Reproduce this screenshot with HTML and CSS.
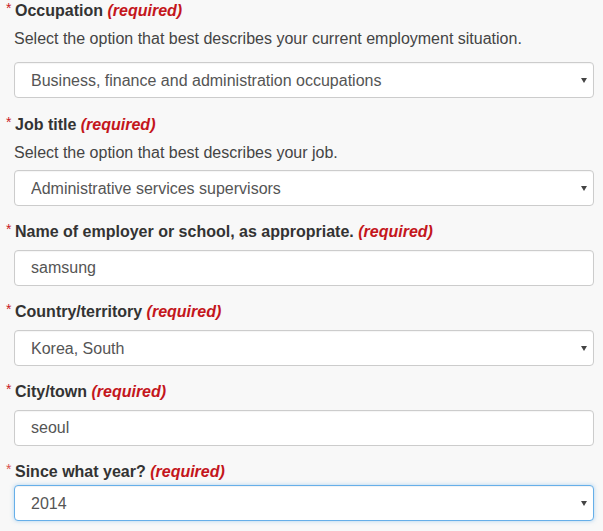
FILE: index.html
```html
<!DOCTYPE html>
<html lang="en">
<head>
    <meta charset="UTF-8">
    <meta name="viewport" content="width=device-width, initial-scale=1.0">
    <title>Employment details</title>
    <link rel="stylesheet" href="styles.css">
</head>
<body>
    <form class="form">
        <!-- Occupation -->
        <div class="form-group form-group-first">
            <label class="label" for="occupation"><span class="mark">*</span>Occupation <em class="req">(required)</em></label>
            <p class="help help-wide">Select the option that best describes your current employment situation.</p>
            <div class="select-wrap">
                <select id="occupation" class="control">
                    <option>Business, finance and administration occupations</option>
                </select>
            </div>
        </div>

        <!-- Job title -->
        <div class="form-group">
            <label class="label" for="job"><span class="mark">*</span>Job title <em class="req">(required)</em></label>
            <p class="help">Select the option that best describes your job.</p>
            <div class="select-wrap">
                <select id="job" class="control">
                    <option>Administrative services supervisors</option>
                </select>
            </div>
        </div>

        <div class="form-group">
            <label class="label" for="employer"><span class="mark">*</span>Name of employer or school, as appropriate. <em class="req">(required)</em></label>
            <input id="employer" class="control" type="text" value="samsung">
        </div>

        <div class="form-group">
            <label class="label" for="country"><span class="mark">*</span>Country/territory <em class="req">(required)</em></label>
            <div class="select-wrap">
                <select id="country" class="control">
                    <option>Korea, South</option>
                </select>
            </div>
        </div>

        <div class="form-group">
            <label class="label" for="city"><span class="mark">*</span>City/town <em class="req">(required)</em></label>
            <input id="city" class="control" type="text" value="seoul">
        </div>

        <div class="form-group">
            <label class="label label-tight" for="year"><span class="mark mark-light">*</span>Since what year? <em class="req">(required)</em></label>
            <div class="select-wrap">
                <select id="year" class="control focused">
                    <option>2014</option>
                </select>
            </div>
        </div>
    </form>
</body>
</html>
```

FILE: styles.css
```css
body {
    margin: 0;
    background-color: #f8f8f8;
    font-family: "Liberation Sans", Arial, sans-serif;
    font-size: 16px;
    color: #333;
}

.form {
    width: 580px;
    margin-left: 14px;
}

.form-group {
    margin-bottom: 15px;
}

.form-group-first {
    margin-bottom: 16px;
}

.label {
    display: block;
    font-weight: bold;
    line-height: 22px;
    margin-bottom: 7px;
    color: #333;
}

.label-tight {
    margin-bottom: 2px;
}

.mark {
    display: inline-block;
    width: 9px;
    margin-left: -8px;
    color: #c9181e;
    font-size: 14px;
    font-weight: normal;
    vertical-align: top;
    line-height: 16px;
}

.mark-light {
    color: #d9534f;
}

.req {
    color: #c4161c;
    font-style: italic;
}

.help {
    margin: -1px 0 6px;
    line-height: 22px;
    color: #444;
}

.help-wide {
    margin-bottom: 12px;
}

.control {
    display: block;
    box-sizing: border-box;
    width: 100%;
    height: 36px;
    padding: 0 30px 0 16px;
    font-family: inherit;
    font-size: 16px;
    color: #555;
    background-color: #fff;
    border: 1px solid #ccc;
    border-radius: 4px;
    box-shadow: inset 0 1px 1px rgba(0, 0, 0, 0.04);
    -webkit-appearance: none;
    appearance: none;
    outline: none;
}

.focused {
    border-color: #66afe9;
    box-shadow: inset 0 1px 1px rgba(0, 0, 0, 0.05), 0 0 4px rgba(102, 175, 233, 0.5);
}

.select-wrap {
    position: relative;
}

/* small dark arrow on the right of the select */
.select-wrap::after {
    content: "";
    position: absolute;
    right: 7px;
    top: 16px;
    border-left: 3px solid transparent;
    border-right: 3px solid transparent;
    border-top: 5px solid #444;
    pointer-events: none;
}
```
